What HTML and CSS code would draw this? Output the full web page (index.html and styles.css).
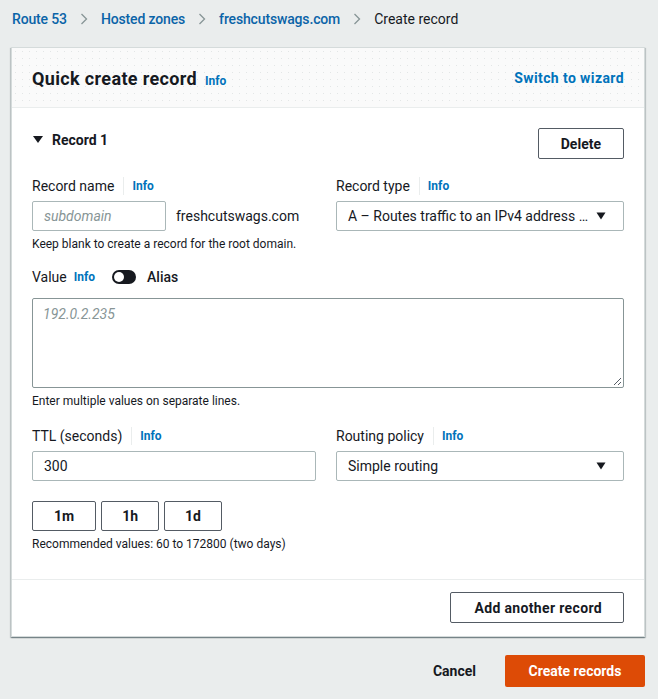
FILE: index.html
```html
<!DOCTYPE html>
<html lang="en">
<head>
<meta charset="utf-8">
<title>Create record</title>
<link rel="stylesheet" href="styles.css">
</head>
<body>
<nav class="crumbs">
  <a class="crumb-link">Route 53</a>
  <svg class="chev" width="8" height="12" viewBox="0 0 8 12"><polyline points="1.5,1 6.5,6 1.5,11" fill="none" stroke="#879596" stroke-width="1.3"/></svg>
  <a class="crumb-link">Hosted zones</a>
  <svg class="chev" width="8" height="12" viewBox="0 0 8 12"><polyline points="1.5,1 6.5,6 1.5,11" fill="none" stroke="#879596" stroke-width="1.3"/></svg>
  <a class="crumb-link">freshcutswags.com</a>
  <svg class="chev" width="8" height="12" viewBox="0 0 8 12"><polyline points="1.5,1 6.5,6 1.5,11" fill="none" stroke="#879596" stroke-width="1.3"/></svg>
  <span class="crumb-current">Create record</span>
</nav>

<section class="card">
  <header class="card-head">
    <div class="title-wrap">
      <h1 class="title">Quick create record</h1>
      <a class="info">Info</a>
    </div>
    <a class="wizard">Switch to wizard</a>
  </header>

  <div class="card-body">
    <div class="record-head">
      <div class="record-title">
        <svg class="tri" width="10" height="7" viewBox="0 0 10 7"><polygon points="0,0 10,0 5,7" fill="#16191f"/></svg>
        <span>Record 1</span>
      </div>
      <button class="btn wide">Delete</button>
    </div>

    <div class="grid">
      <div class="field">
        <div class="label-row">
          <span class="label">Record name</span>
          <span class="sep"></span>
          <a class="info">Info</a>
        </div>
        <div class="name-row">
          <div class="input name-input placeholder">subdomain</div>
          <span class="domain">freshcutswags.com</span>
        </div>
        <p class="help">Keep blank to create a record for the root domain.</p>
      </div>
      <div class="field">
        <div class="label-row">
          <span class="label">Record type</span>
          <span class="sep"></span>
          <a class="info">Info</a>
        </div>
        <div class="input select">
          <span>A – Routes traffic to an IPv4 address …</span>
          <svg class="caret" width="10" height="8" viewBox="0 0 10 8"><polygon points="0.5,0.5 9.5,0.5 5,7.5" fill="#16191f"/></svg>
        </div>
      </div>
    </div>

    <div class="value-row">
      <span class="label">Value</span>
      <a class="info">Info</a>
      <span class="toggle"><span class="knob"></span></span>
      <span class="alias">Alias</span>
    </div>
    <div class="textarea placeholder">192.0.2.235
      <svg class="grip" width="9" height="9" viewBox="0 0 9 9"><line x1="1" y1="8" x2="8" y2="1" stroke="#545b64" stroke-width="1"/><line x1="5" y1="8" x2="8" y2="5" stroke="#545b64" stroke-width="1"/></svg>
    </div>
    <p class="help">Enter multiple values on separate lines.</p>

    <div class="grid ttl-grid">
      <div class="field">
        <div class="label-row">
          <span class="label">TTL (seconds)</span>
          <span class="sep"></span>
          <a class="info">Info</a>
        </div>
        <div class="input">300</div>
      </div>
      <div class="field">
        <div class="label-row">
          <span class="label">Routing policy</span>
          <span class="sep"></span>
          <a class="info">Info</a>
        </div>
        <div class="input select">
          <span>Simple routing</span>
          <svg class="caret" width="10" height="8" viewBox="0 0 10 8"><polygon points="0.5,0.5 9.5,0.5 5,7.5" fill="#16191f"/></svg>
        </div>
      </div>
    </div>

    <div class="ttl-buttons">
      <button class="btn small w1m">1m</button>
      <button class="btn small">1h</button>
      <button class="btn small">1d</button>
    </div>
    <p class="help">Recommended values: 60 to 172800 (two days)</p>
  </div>

  <footer class="card-foot">
    <button class="btn add">Add another record</button>
  </footer>
</section>

<div class="actions">
  <a class="cancel">Cancel</a>
  <button class="primary">Create records</button>
</div>
</body>
</html>
```

FILE: styles.css
```css
* { box-sizing: border-box; }

body {
  margin: 0;
  background: #eaeded;
  font-family: Roboto, "Liberation Sans", sans-serif;
  color: #16191f;
  font-size: 14px;
}

.crumbs {
  display: flex;
  align-items: center;
  height: 38px;
  padding: 0 12px;
  gap: 10px;
}
.crumb-link {
  color: #0a64a8;
  font-weight: 500;
  font-size: 14px;
  letter-spacing: -0.15px;
}
.chev { margin: 0 3px; }
.crumb-current { color: #16191f; font-size: 14px; }

.card {
  margin: 9px 13px 0 11px;
  background: #fff;
  border: 1px solid #d5dbdb;
  box-shadow: 0 1px 1px 0 rgba(0, 28, 36, 0.3), 1px 1px 1px 0 rgba(0, 28, 36, 0.15), -1px 1px 1px 0 rgba(0, 28, 36, 0.15);
}

.card-head {
  height: 60px;
  display: flex;
  align-items: center;
  justify-content: space-between;
  padding: 3px 20px 0;
  background-color: #fafafa;
  background-image: radial-gradient(circle, #e3e6e6 0.6px, transparent 0.8px);
  background-size: 7px 7px;
  border-bottom: 1px solid #eaeded;
}
.title-wrap { display: flex; align-items: baseline; gap: 8px; }
.title {
  margin: 0;
  font-size: 18px;
  font-weight: 700;
  line-height: 24px;
  letter-spacing: 0.35px;
}
.info {
  color: #0073bb;
  font-size: 12px;
  font-weight: 700;
}
.wizard {
  color: #0073bb;
  font-weight: 700;
  font-size: 14px;
  letter-spacing: 0.4px;
  margin-top: -2px;
}

.card-body { padding: 20px 20px 27px; }

.record-head {
  display: flex;
  justify-content: space-between;
  align-items: center;
  margin-bottom: 16px;
}
.record-title {
  display: flex;
  align-items: center;
  gap: 9px;
  font-weight: 700;
  font-size: 14px;
  padding-left: 1px;
  margin-top: -8px;
}

.btn {
  font-family: inherit;
  font-size: 14px;
  font-weight: 700;
  color: #16191f;
  background: #fff;
  border: 1px solid #545b64;
  border-radius: 2px;
  height: 31px;
  padding: 0 19px;
}
.btn.wide { padding: 0 22px; }
.btn.add { padding: 0 21px 0 23px; letter-spacing: 0.35px; }
.btn.small { height: 30px; padding: 0 20px; }
.btn.w1m { padding: 0 21px; }

.grid {
  display: grid;
  grid-template-columns: 284px 1fr;
  column-gap: 20px;
}

.label-row {
  display: flex;
  align-items: center;
  height: 22px;
  margin-bottom: 4px;
}
.label { font-size: 14px; }
.sep {
  width: 1px;
  height: 18px;
  background: #eaeded;
  margin: 0 8px 0 9px;
}

.input {
  height: 30px;
  border: 1px solid #aab7b8;
  border-radius: 2px;
  display: flex;
  align-items: center;
  padding: 0 11px;
  font-size: 14px;
  color: #16191f;
}
.placeholder { color: #879596; font-style: italic; }
.name-row { display: flex; align-items: center; gap: 10px; }
.name-input { width: 134px; }
.domain { font-size: 14px; }

.select { justify-content: space-between; padding-right: 17px; white-space: nowrap; }

.help {
  margin: 5px 0 0;
  font-size: 12px;
  line-height: 16px;
  color: #16191f;
}

.value-row {
  display: flex;
  align-items: center;
  height: 22px;
  margin-top: 14px;
  margin-bottom: 10px;
}
.value-row .info { margin-left: 7px; }
.toggle {
  width: 24px;
  height: 14px;
  border-radius: 7px;
  background: #16191f;
  margin-left: 17px;
  position: relative;
}
.knob {
  position: absolute;
  left: 2px;
  top: 2px;
  width: 10px;
  height: 10px;
  border-radius: 50%;
  background: #fff;
}
.alias { margin-left: 11px; font-weight: 500; }

.textarea {
  position: relative;
  height: 90px;
  border: 1px solid #879596;
  border-radius: 2px;
  padding: 6px 10px;
  font-size: 14px;
  line-height: 18px;
}
.grip { position: absolute; right: 1px; bottom: 1px; }

.ttl-grid { margin-top: 16px; }

.ttl-buttons {
  display: flex;
  gap: 5px;
  margin-top: 20px;
}

.card-foot {
  border-top: 1px solid #eaeded;
  display: flex;
  justify-content: flex-end;
  padding: 12px 20px 13px;
}

.actions {
  display: flex;
  justify-content: flex-end;
  align-items: center;
  gap: 29px;
  padding: 18px 13px 0 0;
}
.cancel { font-weight: 700; font-size: 14px; color: #16191f; }
.primary {
  font-family: inherit;
  font-size: 14px;
  font-weight: 700;
  color: #fff;
  background: #dd4b06;
  border: none;
  border-radius: 2px;
  height: 32px;
  width: 140px;
}
```
